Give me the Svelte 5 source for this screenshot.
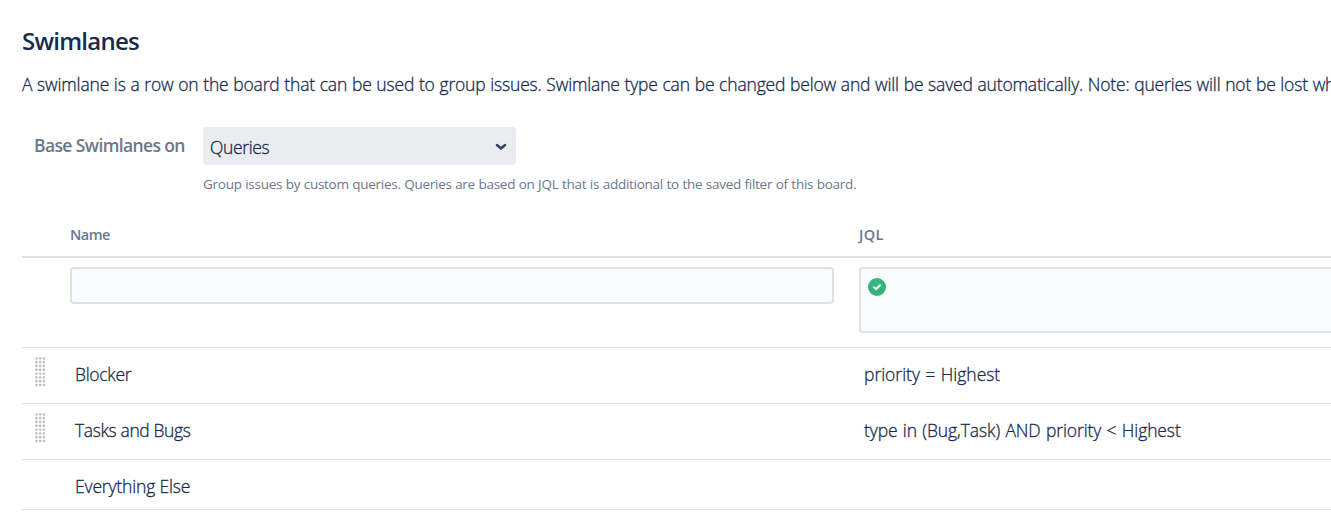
<script>
  const rows = [
    { name: 'Blocker', jql: 'priority = Highest', draggable: true, nameSpacing: -0.3, jqlSpacing: -0.02 },
    { name: 'Tasks and Bugs', jql: 'type in (Bug,Task) AND priority < Highest', draggable: true, nameSpacing: -0.38, jqlSpacing: -0.1 },
    { name: 'Everything Else', jql: '', draggable: false, nameSpacing: -0.16, jqlSpacing: 0 },
  ];
  const dots = Array.from({ length: 24 }, (_, i) => ({ x: (i % 3) * 3.75, y: Math.floor(i / 3) * 3.8 }));
</script>

<main>
  <h2><span>Swimlanes</span></h2>
  <p class="intro"><span>A swimlane is a row on the board that can be used to group issues. Swimlane type can be changed below and will be saved automatically. Note: queries will not be lost when</span></p>

  <div class="field">
    <span class="label">Base Swimlanes on</span>
    <div class="control">
      <div class="select">
        <span>Queries</span>
        <svg width="12" height="8" viewBox="0 0 12 8"><path d="M2 2.1 L6 5.6 L10 2.1" /></svg>
      </div>
      <p class="hint">Group issues by custom queries. Queries are based on JQL that is additional to the saved filter of this board.</p>
    </div>
  </div>

  <div class="table">
    <div class="row head"><span></span><span class="th">Name</span><span class="th jql">JQL</span></div>
    <div class="row create">
      <span></span>
      <div class="input"></div>
      <div class="textarea">
        <svg width="18" height="18" viewBox="0 0 18 18"><circle cx="9" cy="9" r="9" /><path d="M6 9.2 L8.1 11.1 L12 7.2" /></svg>
      </div>
    </div>
    {#each rows as row}
      <div class="row item" class:last={!row.draggable}>
        <span class="handle">
          {#if row.draggable}
            <svg width="12" height="31" viewBox="0 0 12 31">
              {#each dots as d}<rect x={d.x + 0.2} y={d.y + 0.2} width="2.4" height="2.4" rx="0.7" />{/each}
            </svg>
          {/if}
        </span>
        <span class="cell" style:letter-spacing="{row.nameSpacing}px">{row.name}</span>
        <span class="cell query" style:letter-spacing="{row.jqlSpacing}px">{row.jql}</span>
      </div>
    {/each}
  </div>
</main>

<style>
  :global(body) { margin: 0; background: #fff; overflow: hidden; }
  main {
    box-sizing: border-box;
    height: 519px;
    padding: 23px 0 0 22px;
    overflow: hidden;
    color: #172b4d;
    font: 300 17.5px/24px "Open Sans", "Noto Sans", sans-serif;
  }
  .intro, .select, .cell { -webkit-text-stroke: 0.3px #172b4d; }
  h2 { margin: 0; height: 35px; font-size: 24px; line-height: 35px; font-weight: 600; letter-spacing: -0.75px; }
  .intro { margin: 14px 0 0; height: 24px; white-space: nowrap; letter-spacing: -0.175px; word-spacing: 0.4px; }
  .field { display: flex; height: 93px; margin-top: 31px; }
  .label { width: 169px; padding-left: 12px; margin-top: 6px; color: #6b778c; font-weight: 600; letter-spacing: -0.62px; box-sizing: border-box; white-space: nowrap; }
  .control { padding-left: 12px; }
  .select {
    display: flex; align-items: center; justify-content: space-between;
    box-sizing: border-box; width: 313px; height: 38px; padding: 2px 9px 0 7px;
    border-radius: 4px; background: #ebecf0; letter-spacing: -0.35px;
  }
  .select path { fill: none; stroke: #344563; stroke-width: 2.6; stroke-linecap: round; stroke-linejoin: round; }
  .hint { margin: 9px 0 0; font-size: 13.5px; line-height: 20px; font-weight: 400; color: #6b778c; white-space: nowrap; letter-spacing: -0.27px; word-spacing: 0.3px; }
  .row { display: grid; grid-template-columns: 48px 764px 1fr; column-gap: 0; box-sizing: border-box; border-bottom: 1px solid #dfe1e6; }
  .row > :nth-child(3) { margin-left: 25px; }
  .head { height: 38px; border-bottom-width: 2px; }
  .th { padding-top: 5px; font-size: 14.5px; line-height: 20px; font-weight: 600; color: #6b778c; letter-spacing: -0.5px; }
  .jql { letter-spacing: 0.4px; }
  .create { height: 90px; padding-top: 9px; align-items: start; }
  .input, .textarea { box-sizing: border-box; border: 2px solid #dfe1e6; border-radius: 4px; background: #fafbfc; }
  .input { height: 37px; }
  .textarea { height: 66px; padding: 9px 0 0 7px; border-right: 0; border-radius: 4px 0 0 4px; }
  .textarea svg { display: block; }
  .textarea circle { fill: #36b37e; }
  .textarea path { fill: none; stroke: #fff; stroke-width: 2; stroke-linecap: round; stroke-linejoin: round; }
  .item { height: 56px; }
  .item.last { height: 50px; }
  .handle { padding: 9px 0 0 13px; }
  .handle svg { display: block; }
  .handle rect { fill: #bdbdba; }
  .cell { padding: 14px 0 0 5px; white-space: nowrap; }
  .query { word-spacing: 0.9px; }
</style>
